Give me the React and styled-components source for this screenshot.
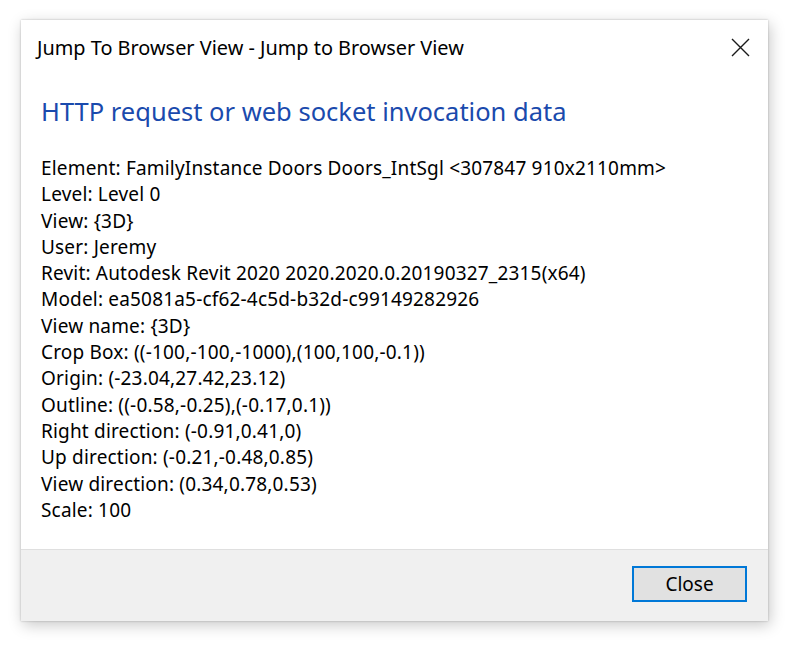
import React from "react"
import styled, { createGlobalStyle } from "styled-components"

const GlobalStyle = createGlobalStyle`
  html, body {
    margin: 0;
    padding: 0;
    background: #ffffff;
  }
  body {
    font-family: "Noto Sans", "Open Sans", sans-serif;
  }
`

const lines = [
  "Element: FamilyInstance Doors Doors_IntSgl <307847 910x2110mm>",
  "Level: Level 0",
  "View: {3D}",
  "User: Jeremy",
  "Revit: Autodesk Revit 2020 2020.2020.0.20190327_2315(x64)",
  "Model: ea5081a5-cf62-4c5d-b32d-c99149282926",
  "View name: {3D}",
  "Crop Box: ((-100,-100,-1000),(100,100,-0.1))",
  "Origin: (-23.04,27.42,23.12)",
  "Outline: ((-0.58,-0.25),(-0.17,0.1))",
  "Right direction: (-0.91,0.41,0)",
  "Up direction: (-0.21,-0.48,0.85)",
  "View direction: (0.34,0.78,0.53)",
  "Scale: 100",
]

export default () => {
  return (
    <Page>
      <GlobalStyle />
      <Dialog>
        <TitleBar>
          <Title>Jump To Browser View - Jump to Browser View</Title>
          <CloseX aria-label="Close">
            <svg width="19" height="19" viewBox="0 0 19 19">
              <path
                d="M1 1 L18 18 M18 1 L1 18"
                stroke="#1a1a1a"
                strokeWidth="1.4"
                fill="none"
              />
            </svg>
          </CloseX>
        </TitleBar>
        <Content>
          <Heading>HTTP request or web socket invocation data</Heading>
          <Details>
            {lines.map((line) => (
              <Line key={line}>{line}</Line>
            ))}
          </Details>
        </Content>
        <Footer>
          <Button>Close</Button>
        </Footer>
      </Dialog>
    </Page>
  )
}

const Page = styled.div`
  width: 792px;
  height: 648px;
  padding: 20px 0 0 21px;
  box-sizing: border-box;
`

const Dialog = styled.div`
  width: 747px;
  height: 601px;
  background: #ffffff;
  display: flex;
  flex-direction: column;
  box-shadow: 0 0 2px rgba(0, 0, 0, 0.25), 2px 4px 14px rgba(0, 0, 0, 0.22);
`

const TitleBar = styled.div`
  height: 54px;
  display: flex;
  align-items: center;
  justify-content: space-between;
  padding: 0 18px 0 16px;
`

const Title = styled.div`
  font-size: 19.9px;
  color: #000000;
`

const CloseX = styled.div`
  width: 19px;
  height: 19px;
  display: flex;
`

const Content = styled.div`
  flex: 1;
  padding: 0 20px;
`

const Heading = styled.h1`
  margin: 20px 0 0;
  font-size: 25.5px;
  font-weight: 400;
  line-height: 34px;
  color: #1a4aad;
`

const Details = styled.div`
  margin-top: 27px;
  font-size: 19px;
  letter-spacing: 0.18px;
  line-height: 26.3px;
  color: #000000;
`

const Line = styled.div`
  white-space: nowrap;
`

const Footer = styled.div`
  height: 72px;
  background: #f0f0f0;
  border-top: 1px solid #dfdfdf;
  box-sizing: border-box;
  display: flex;
  justify-content: flex-end;
  align-items: flex-start;
  padding: 16px 21px 0 0;
`

const Button = styled.button`
  width: 115px;
  height: 36px;
  background: #e1e1e1;
  border: 2px solid #0078d7;
  border-radius: 0;
  font-family: inherit;
  font-size: 19px;
  color: #000000;
  padding: 0;
`
